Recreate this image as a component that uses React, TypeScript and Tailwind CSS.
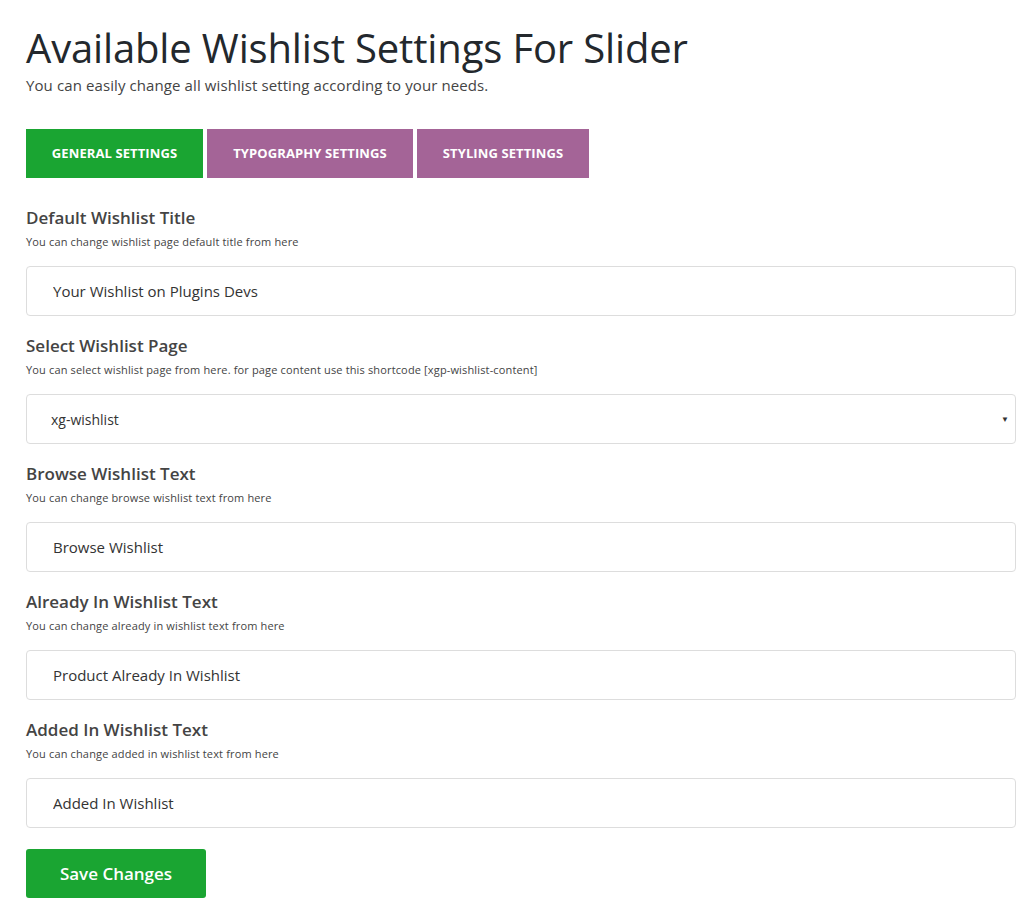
import { useState } from "react";

const fields = [
  {
    id: "title",
    label: "Default Wishlist Title",
    help: "You can change wishlist page default title from here",
    value: "Your Wishlist on Plugins Devs",
  },
  {
    id: "page",
    label: "Select Wishlist Page",
    help: "You can select wishlist page from here. for page content use this shortcode [xgp-wishlist-content]",
    value: "xg-wishlist",
    select: true,
  },
  {
    id: "browse",
    label: "Browse Wishlist Text",
    help: "You can change browse wishlist text from here",
    value: "Browse Wishlist",
  },
  {
    id: "already",
    label: "Already In Wishlist Text",
    help: "You can change already in wishlist text from here",
    value: "Product Already In Wishlist",
  },
  {
    id: "added",
    label: "Added In Wishlist Text",
    help: "You can change added in wishlist text from here",
    value: "Added In Wishlist",
  },
];

const tabs = [
  { id: "general", label: "General Settings", w: "w-[177px]" },
  { id: "typography", label: "Typography Settings", w: "w-[206px]" },
  { id: "styling", label: "Styling Settings", w: "w-[172px]" },
];

export default function App() {
  const [active, setActive] = useState("general");

  return (
    <div className="min-h-screen bg-white pl-[26px] pr-[2px] pt-[24px] font-['Open_Sans',sans-serif] text-[#333]">
      <h1 className="text-[40px] leading-[48px] font-normal tracking-[-0.15px] text-[#23282d]">
        Available Wishlist Settings For Slider
      </h1>
      <p className="mt-[1px] text-[15px] leading-[24px] tracking-[0.1px] text-[#444]">
        You can easily change all wishlist setting according to your needs.
      </p>

      <div className="mt-[32px] flex gap-[4px]">
        {tabs.map((t) => (
          <button
            key={t.id}
            type="button"
            onClick={() => setActive(t.id)}
            className={`${t.w} h-[49px] text-[13px] font-bold uppercase tracking-[0.1px] text-white ${
              active === t.id ? "bg-[#1aa532]" : "bg-[#a46497]"
            }`}
          >
            {t.label}
          </button>
        ))}
      </div>

      <form className="mt-[27px] flex flex-col gap-[17px]" onSubmit={(e) => e.preventDefault()}>
        {fields.map((f) => (
          <div key={f.id} className="flex flex-col">
            <label className="text-[17px] leading-[26px] font-semibold text-[#444]">{f.label}</label>
            <span className="mt-[4px] text-[11px] leading-[14px] tracking-[0.15px] text-[#444]">{f.help}</span>
            {f.select ? (
              <div className="relative mt-[17px]">
                <select
                  defaultValue={f.value}
                  className="h-[50px] w-full appearance-none rounded-[4px] border border-[#ddd] bg-white pl-[24px] text-[14px] text-[#333] outline-none"
                >
                  <option>{f.value}</option>
                </select>
                <span className="pointer-events-none absolute right-[7px] top-[19px] text-[8px] text-[#333]">▼</span>
              </div>
            ) : (
              <input
                defaultValue={f.value}
                className="mt-[17px] h-[50px] w-full rounded-[4px] border border-[#ddd] bg-white pl-[26px] text-[15px] text-[#333] outline-none"
              />
            )}
          </div>
        ))}

        <div className="pt-[4px]">
          <button
            type="submit"
            className="h-[49px] w-[180px] rounded-[3px] bg-[#1aa532] text-[17px] font-semibold text-white"
          >
            Save Changes
          </button>
        </div>
      </form>
    </div>
  );
}
